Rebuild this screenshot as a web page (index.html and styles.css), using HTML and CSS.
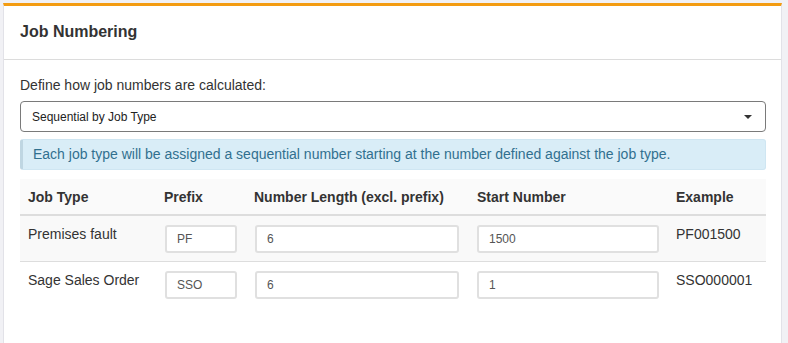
FILE: index.html
```html
<!DOCTYPE html>
<html lang="en">
<head>
  <meta charset="UTF-8" />
  <title>Job Numbering</title>
  <link rel="stylesheet" href="styles.css">
</head>
<body>
  <div class="panel">
    <div class="panel-heading">Job Numbering</div>

    <div class="panel-body">
      <label class="field-label" for="numberingMode">Define how job numbers are calculated:</label>
      <div class="select-wrap">
        <select id="numberingMode" class="select-box">
          <option>Sequential by Job Type</option>
        </select>
        <span class="caret"></span>
      </div>

      <div class="alert-info">
        Each job type will be assigned a sequential number starting at the number defined against the job type.
      </div>

      <table class="job-table">
        <thead>
          <tr>
            <th class="col-type">Job Type</th>
            <th class="col-prefix">Prefix</th>
            <th class="col-length">Number Length (excl. prefix)</th>
            <th class="col-start">Start Number</th>
            <th class="col-example">Example</th>
          </tr>
        </thead>
        <tbody>
          <tr>
            <td>Premises fault</td>
            <td><input type="text" class="cell-input prefix-input" value="PF"></td>
            <td><input type="text" class="cell-input length-input" value="6"></td>
            <td><input type="text" class="cell-input start-input" value="1500"></td>
            <td>PF001500</td>
          </tr>
          <tr>
            <td>Sage Sales Order</td>
            <td><input type="text" class="cell-input prefix-input" value="SSO"></td>
            <td><input type="text" class="cell-input length-input" value="6"></td>
            <td><input type="text" class="cell-input start-input" value="1"></td>
            <td>SSO000001</td>
          </tr>
        </tbody>
      </table>
    </div>
  </div>
</body>
</html>
```

FILE: styles.css
```css
* {
  box-sizing: border-box;
}

body {
  margin: 0;
  background: #f1f1f5;
  font-family: 'Liberation Sans', Arial, sans-serif;
  font-size: 14px;
  color: #333;
}

.panel {
  margin: 3px 6px 0 3px;
  height: 340px;
  background: #fff;
  border-top: 3px solid #f39c12;
  border-left: 1px solid #e2e2e8;
  border-right: 1px solid #e2e2e8;
}

.panel-heading {
  height: 54px;
  padding: 17px 16px 0;
  font-size: 16px;
  font-weight: bold;
  color: #333;
  border-bottom: 1px solid #dcdcdc;
}

.panel-body {
  padding: 16px 15px 0 16px;
}

.field-label {
  display: block;
  line-height: 18px;
  margin-bottom: 7px;
  color: #333;
}

.select-wrap {
  position: relative;
}

.select-box {
  display: block;
  width: 100%;
  height: 31px;
  padding: 0 11px;
  font-family: inherit;
  font-size: 12px;
  color: #222;
  background: #fff;
  border: 1px solid #7a7a7a;
  border-radius: 4px;
  appearance: none;
  -webkit-appearance: none;
  outline: none;
}

.caret {
  position: absolute;
  right: 14px;
  top: 14px;
  width: 0;
  height: 0;
  border-left: 4px solid transparent;
  border-right: 4px solid transparent;
  border-top: 4px solid #333;
  pointer-events: none;
}

.alert-info {
  margin-top: 7px;
  height: 31px;
  padding: 5px 12px 0 10px;
  line-height: 18px;
  color: #31708f;
  background: #d9edf7;
  border: 1px solid #cfe6f2;
  border-left: 3px solid #bfd6e2;
  border-radius: 3px;
}

.job-table {
  width: 100%;
  margin-top: 9px;
  border-collapse: collapse;
  table-layout: fixed;
}

.job-table th {
  height: 36px;
  padding: 0 8px;
  text-align: left;
  font-weight: bold;
  background: #fafafa;
  border-bottom: 2px solid #dddddd;
}

.job-table td {
  padding: 9px 8px 8px;
  vertical-align: top;
  line-height: 18px;
  border-bottom: 1px solid #dddddd;
}

.job-table tbody tr:nth-child(odd) {
  background: #f9f9f9;
}

.job-table tbody tr:last-child td {
  border-bottom: none;
}

.col-type { width: 136px; }
.col-prefix { width: 90px; }
.col-length { width: 223px; }
.col-start { width: 199px; }

.cell-input {
  display: block;
  height: 28px;
  padding: 0 10px;
  font-family: inherit;
  font-size: 12px;
  color: #555;
  background: #fff;
  border: 2px solid #e0e0e0;
  border-radius: 3px;
  outline: none;
}

.prefix-input {
  margin-left: 1px;
  width: 72px;
}

.length-input {
  margin-left: 1px;
  width: 204px;
}

.start-input {
  width: 182px;
}
```
